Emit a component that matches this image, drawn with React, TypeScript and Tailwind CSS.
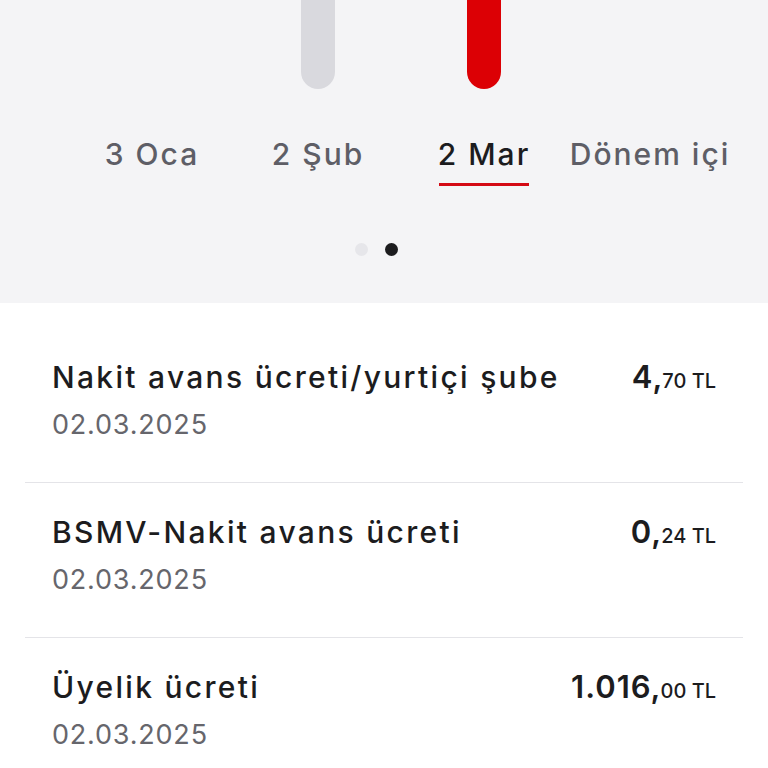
import React from "react";

interface Period {
  label: string;
  bar: "none" | "grey" | "red";
  active?: boolean;
}

interface Item {
  title: string;
  date: string;
  whole: string;
  cents: string;
}

const periods: Period[] = [
  { label: "3 Oca", bar: "none" },
  { label: "2 Şub", bar: "grey" },
  { label: "2 Mar", bar: "red", active: true },
  { label: "Dönem içi", bar: "none" },
];

const items: Item[] = [
  { title: "Nakit avans ücreti/yurtiçi şube", date: "02.03.2025", whole: "4", cents: "70" },
  { title: "BSMV-Nakit avans ücreti", date: "02.03.2025", whole: "0", cents: "24" },
  { title: "Üyelik ücreti", date: "02.03.2025", whole: "1.016", cents: "00" },
];

export default function App() {
  return (
    <div className="min-h-screen bg-white font-['Inter',sans-serif] overflow-hidden h-[768px]">
      {/* Chart / period selector */}
      <div className="bg-[#f4f4f6] h-[303px] flex flex-col">
        <div className="flex pl-[69px]">
          {periods.map((p) => (
            <div key={p.label} className="w-[166px] flex flex-col items-center">
              <div className="h-[89px] flex items-end">
                {p.bar === "grey" && <div className="w-[34px] h-[120px] rounded-b-full bg-[#d9d9de]" />}
                {p.bar === "red" && <div className="w-[34px] h-[120px] rounded-b-full bg-[#dc0005]" />}
              </div>
              <div
                className={`mt-[47px] text-[30px] leading-[36px] font-medium whitespace-nowrap tracking-[2px] ${
                  p.active ? "text-[#1c1c1e]" : "text-[#5e5e66]"
                }`}
              >
                {p.label}
              </div>
              <div className={`mt-[11px] h-[3px] w-[90px] ${p.active ? "bg-[#d40a14]" : "bg-transparent"}`} />
            </div>
          ))}
        </div>
        <div className="flex justify-center gap-[17px] mt-[57px] pr-[16px]">
          <div className="w-[13px] h-[13px] rounded-full bg-[#e6e6ea]" />
          <div className="w-[13px] h-[13px] rounded-full bg-[#1c1c1e]" />
        </div>
      </div>

      {/* Transactions */}
      <div className="px-[25px] pt-[25px]">
        {items.map((it, i) => (
          <div
            key={it.title}
            className={`px-[27px] h-[155px] pt-[31px] flex justify-between ${
              i < items.length - 1 ? "border-b border-[#e4e4e8]" : ""
            }`}
          >
            <div>
              <div className="text-[30px] leading-[36px] font-medium text-[#1c1c1e] tracking-[2.3px] whitespace-nowrap">
                {it.title}
              </div>
              <div className="mt-[14px] text-[27px] leading-[32px] text-[#66666c] tracking-[0.8px]">{it.date}</div>
            </div>
            <div className="text-[#1c1c1e] whitespace-nowrap leading-[36px]">
              <span className="text-[31px] font-semibold tracking-[1px] mr-[-1px]">{it.whole}</span>
              <span className="text-[31px] font-semibold">,</span>
              <span className="text-[20px] font-medium">{it.cents} TL</span>
            </div>
          </div>
        ))}
      </div>
    </div>
  );
}
